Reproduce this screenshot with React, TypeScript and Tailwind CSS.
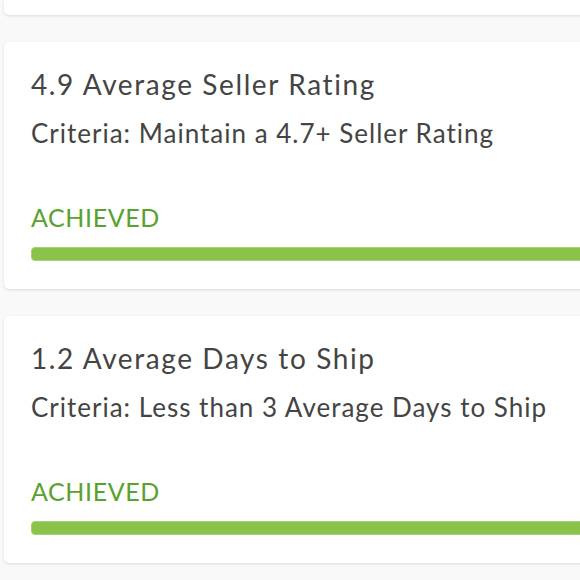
import React from "react";

const cards = [
  { title: "4.9 Average Seller Rating", criteria: "Criteria: Maintain a 4.7+ Seller Rating" },
  { title: "1.2 Average Days to Ship", criteria: "Criteria: Less than 3 Average Days to Ship" },
];

export default function App() {
  return (
    <div
      className="w-[580px] h-[580px] overflow-hidden bg-[#f9f9f9]"
      style={{ fontFamily: "Lato, 'Open Sans', sans-serif" }}
    >
      <div className="flex flex-col gap-[27px] pl-[4px]">
        <div className="h-[15px] w-[620px] bg-white rounded-b-[5px] shadow-[0_1px_3px_rgba(0,0,0,0.12)]" />
        {cards.map((c) => (
          <div
            key={c.title}
            className="w-[620px] bg-white rounded-[5px] shadow-[0_1px_3px_rgba(0,0,0,0.12)] pl-[27px] pt-[25px] pb-[28px]"
          >
            <div className="text-[28px] leading-[34px] tracking-[1.6px] text-[#444444]">{c.title}</div>
            <div className="mt-[15px] text-[26px] leading-[34px] tracking-[1px] text-[#444444]">{c.criteria}</div>
            <div className="mt-[52px] text-[25px] leading-[30px] text-[#58a22d] tracking-[0.6px]">ACHIEVED</div>
            <div className="mt-[15px] h-[14px] w-[600px] rounded-[4px] bg-[#8bc34a] border border-[#a3d36c]" />
          </div>
        ))}
      </div>
    </div>
  );
}
